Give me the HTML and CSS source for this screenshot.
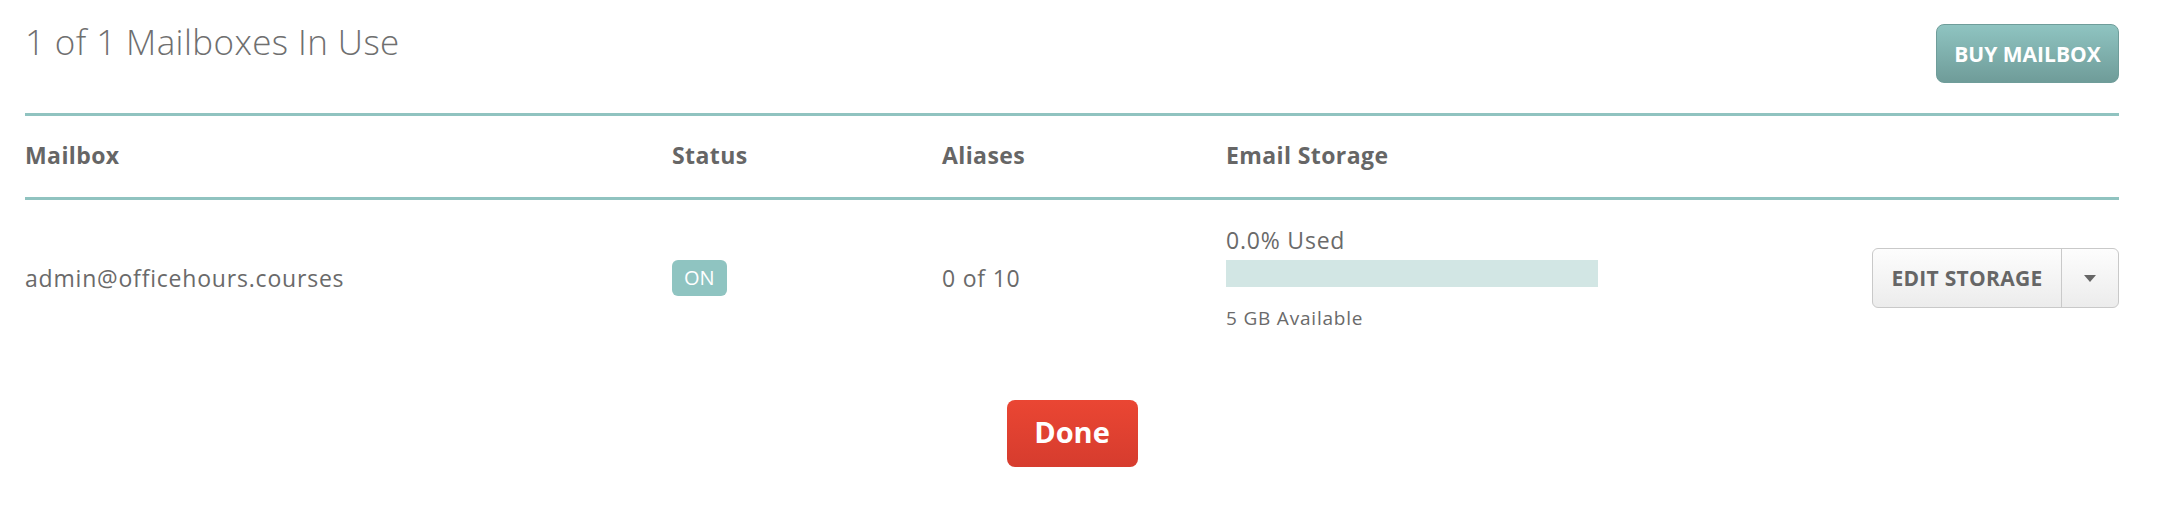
FILE: index.html
```html
<!DOCTYPE html>
<html lang="en">
  <head>
    <meta charset="UTF-8" />
    <title>Mailboxes</title>
    <link rel="stylesheet" href="styles.css">
  </head>
  <body>
    <div class="panel">
      <div class="panel-head">
        <h2 class="panel-title">1 of 1 Mailboxes In Use</h2>
        <button class="btn btn-buy">BUY MAILBOX</button>
      </div>

      <div class="mail-table">
        <div class="row row-head">
          <div>Mailbox</div>
          <div>Status</div>
          <div>Aliases</div>
          <div>Email Storage</div>
          <div></div>
        </div>
        <div class="row row-body">
          <div>admin@officehours.courses</div>
          <div><span class="badge">ON</span></div>
          <div>0 of 10</div>
          <div class="storage">
            <div class="storage-used">0.0% Used</div>
            <div class="storage-bar"><div class="storage-fill" style="width: 0%"></div></div>
            <div class="storage-free">5 GB Available</div>
          </div>
          <div class="split-btn">
            <button class="split-main">EDIT STORAGE</button>
            <button class="split-caret"><span class="caret"></span></button>
          </div>
        </div>
      </div>

      <div class="actions">
        <button class="btn btn-done">Done</button>
      </div>
    </div>
  </body>
</html>
```

FILE: styles.css
```css
body {
  margin: 0;
  background: #fff;
  font-family: "Open Sans", "Liberation Sans", sans-serif;
  color: #666;
}

.panel {
  width: 2094px;
  margin-left: 25px;
}

.panel-head {
  display: flex;
  justify-content: space-between;
  align-items: flex-start;
  height: 113px;
}

.panel-title {
  margin: 18px 0 0;
  font-size: 35px;
  font-weight: 300;
  color: #6f6f6f;
  letter-spacing: 0.4px;
}

.btn {
  font-family: inherit;
  border: none;
  cursor: pointer;
  color: #fff;
  font-weight: 700;
}

.btn-buy {
  margin-top: 24px;
  width: 183px;
  height: 59px;
  font-size: 21px;
  border-radius: 8px;
  border: 1px solid #6f9d9a;
  background: linear-gradient(#8fc4c1, #6f9c99);
}

.mail-table {
  border-top: 3px solid #90c3c0;
}

.row {
  display: grid;
  grid-template-columns: 647px 270px 284px 1fr auto;
  align-items: center;
}

.row-head {
  box-sizing: border-box;
  height: 84px;
  padding-bottom: 4px;
  font-weight: 700;
  font-size: 23px;
  letter-spacing: 0.4px;
  color: #666;
  border-bottom: 3px solid #90c3c0;
}

.row-body {
  height: 156px;
  font-size: 23px;
  letter-spacing: 0.8px;
  color: #6a6a6a;
}

.badge {
  display: inline-block;
  background: #8fc4c1;
  color: #fff;
  font-size: 20px;
  letter-spacing: 0;
  line-height: 36px;
  padding: 0 12px;
  border-radius: 6px;
}

.storage {
  align-self: start;
  padding-top: 25px;
}

.storage-used {
  line-height: 30px;
}

.storage-bar {
  width: 372px;
  height: 27px;
  margin: 5px 0 19px;
  background: #d2e6e4;
}

.storage-fill {
  height: 100%;
  background: #8fc4c1;
}

.storage-free {
  font-size: 19px;
  letter-spacing: 0.8px;
  line-height: 24px;
}

.split-btn {
  display: flex;
  height: 58px;
  border: 1px solid #c9c9c9;
  border-radius: 6px;
  background: linear-gradient(#fdfdfd, #ececec);
  overflow: hidden;
}

.split-main,
.split-caret {
  font-family: inherit;
  background: none;
  border: none;
  color: #666;
  cursor: pointer;
}

.split-main {
  width: 188px;
  font-weight: 700;
  font-size: 21px;
  letter-spacing: 0.3px;
}

.split-caret {
  width: 57px;
  border-left: 1px solid #c9c9c9;
  display: flex;
  justify-content: center;
  align-items: center;
}

.caret {
  width: 0;
  height: 0;
  border-left: 6px solid transparent;
  border-right: 6px solid transparent;
  border-top: 7px solid #666;
}

.actions {
  display: flex;
  justify-content: center;
  padding-top: 44px;
}

.btn-done {
  width: 131px;
  height: 67px;
  padding-bottom: 5px;
  font-size: 29px;
  border-radius: 8px;
  background: linear-gradient(#ea4633, #d63c2e);
}
```
